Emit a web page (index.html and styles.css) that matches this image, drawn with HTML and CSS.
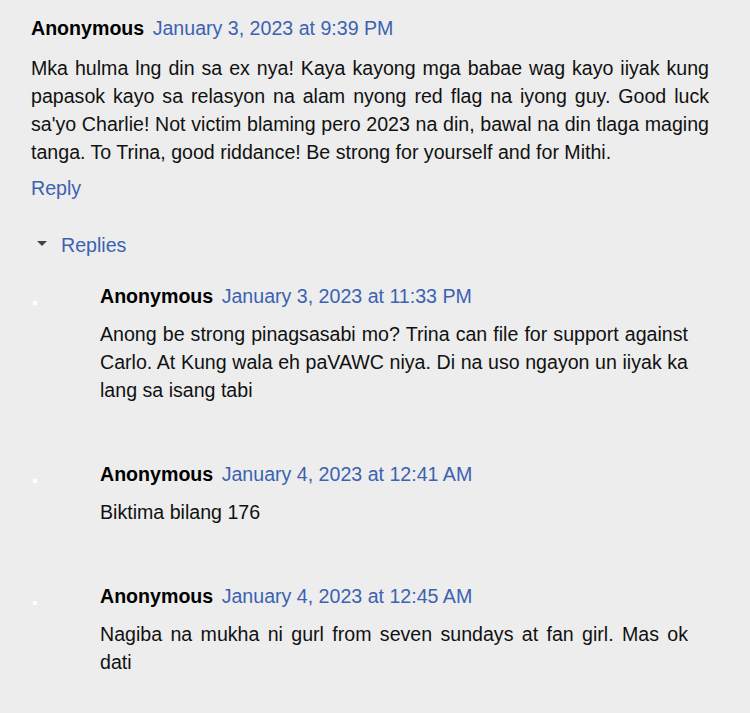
FILE: index.html
```html
<!DOCTYPE html>
<html lang="en">
<head>
    <meta charset="UTF-8">
    <title>Comments</title>
    <link rel="stylesheet" href="styles.css">
</head>
<body>
<div class="comments">
    <div class="comment">
        <div class="comment-head">
            <span class="author">Anonymous</span>
            <a class="date" href="#">January 3, 2023 at 9:39 PM</a>
        </div>
        <p class="comment-body">Mka hulma lng din sa ex nya! Kaya kayong mga babae wag kayo iiyak kung papasok kayo sa relasyon na alam nyong red flag na iyong guy. Good luck sa'yo Charlie! Not victim blaming pero 2023 na din, bawal na din tlaga maging tanga. To Trina, good riddance! Be strong for yourself and for Mithi.</p>
        <a class="reply-link" href="#">Reply</a>

        <div class="replies-toggle">
            <span class="arrow"></span>
            <a href="#">Replies</a>
        </div>

        <ul class="replies">
            <li class="reply">
                <div class="comment-head">
                    <span class="author">Anonymous</span>
                    <a class="date" href="#">January 3, 2023 at 11:33 PM</a>
                </div>
                <p class="comment-body">Anong be strong pinagsasabi mo? Trina can file for support against Carlo. At Kung wala eh paVAWC niya. Di na uso ngayon un iiyak ka lang sa isang tabi</p>
            </li>
            <li class="reply">
                <div class="comment-head">
                    <span class="author">Anonymous</span>
                    <a class="date" href="#">January 4, 2023 at 12:41 AM</a>
                </div>
                <p class="comment-body">Biktima bilang 176</p>
            </li>
            <li class="reply">
                <div class="comment-head">
                    <span class="author">Anonymous</span>
                    <a class="date" href="#">January 4, 2023 at 12:45 AM</a>
                </div>
                <p class="comment-body">Nagiba na mukha ni gurl from seven sundays at fan girl. Mas ok dati</p>
            </li>
        </ul>
    </div>
</div>
</body>
</html>
```

FILE: styles.css
```css
body {
    margin: 0;
    padding: 0;
    background-color: #ededed;
    font-family: "Liberation Sans", Arial, sans-serif;
    font-size: 19.6px;
    color: #111;
}
a {
    color: #3c62b1;
    text-decoration: none;
}
.comments {
    padding: 14px 41px 0 31px;
}
.comment-head {
    line-height: 28px;
    height: 28px;
}
.author {
    font-weight: bold;
    color: #000;
    margin-right: 3px;
}
.comment-body {
    margin: 12px 0 0;
    line-height: 28px;
    text-align: justify;
}
.reply-link {
    display: block;
    margin-top: 8px;
    line-height: 28px;
}
.replies-toggle {
    margin-top: 29px;
    line-height: 28px;
    display: flex;
    align-items: center;
}
.arrow {
    width: 0;
    height: 0;
    border-left: 5px solid transparent;
    border-right: 5px solid transparent;
    border-top: 5px solid #444;
    margin: 0 14px 4px 6px;
}
.replies {
    list-style: none;
    margin: 23px 0 0;
    padding: 0 21px 0 69px;
}
.reply {
    position: relative;
    margin-bottom: 56px;
}
.reply::before {
    content: "";
    position: absolute;
    left: -67px;
    top: 19px;
    width: 4px;
    height: 4px;
    background: #fff;
}
.reply .comment-body {
    margin-top: 10px;
}
```
